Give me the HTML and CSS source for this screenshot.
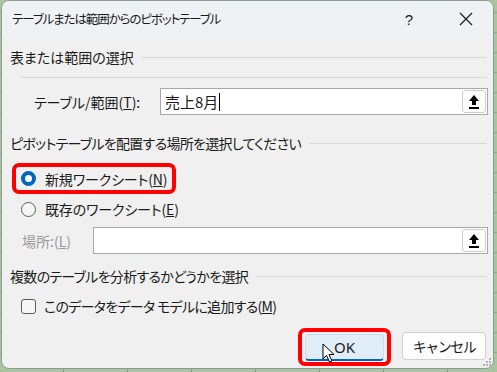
FILE: index.html
```html
<!DOCTYPE html>
<html lang="ja">
<head>
<meta charset="utf-8">
<title>ピボットテーブル</title>
<link rel="stylesheet" href="styles.css">
</head>
<body>
<div class="dialog">
  <div class="titlebar">
    <span class="title">テーブルまたは範囲からのピボットテーブル</span>
    <span class="help">?</span>
    <span class="close">
      <svg width="14" height="14" viewBox="0 0 14 14"><path d="M1 1L13 13M13 1L1 13" stroke="#1a1a1a" stroke-width="1.2" fill="none"/></svg>
    </span>
  </div>
  <div class="content">
    <div class="section-head"><span>表または範囲の選択</span><span class="rule"></span></div>
    <div class="sep"></div>
    <div class="field-row">
      <span class="label label-range">テーブル/範囲(<u>T</u>):</span>
      <div class="input input-range">
        <span class="value">売上8月<span class="caret"></span></span>
        <span class="pick">
          <svg width="12" height="16" viewBox="0 0 12 16"><path d="M6 1L11 7H8V11H4V7H1Z" fill="#000"/><rect x="1" y="13" width="10" height="2" fill="#000"/></svg>
        </span>
      </div>
    </div>

    <div class="section-head head2"><span class="tight">ピボットテーブルを配置する場所を選択してください</span><span class="rule"></span></div>
    <div class="highlight radio-hl">
      <span class="radio on"></span><span class="opt">新規ワークシート(<u>N</u>)</span>
    </div>
    <div class="radio-row">
      <span class="radio"></span><span class="opt">既存のワークシート(<u>E</u>)</span>
    </div>
    <div class="field-row loc-row">
      <span class="label label-loc disabled">場所:(<u>L</u>)</span>
      <div class="input input-loc">
        <span class="value"></span>
        <span class="pick">
          <svg width="12" height="16" viewBox="0 0 12 16"><path d="M6 1L11 7H8V11H4V7H1Z" fill="#000"/><rect x="1" y="13" width="10" height="2" fill="#000"/></svg>
        </span>
      </div>
    </div>

    <div class="section-head head3"><span class="tight">複数のテーブルを分析するかどうかを選択</span><span class="rule"></span></div>
    <div class="check-row">
      <span class="checkbox"></span><span class="opt tight">このデータをデータ モデルに追加する(<u>M</u>)</span>
    </div>

    <div class="buttons">
      <div class="highlight ok-hl">
        <button class="btn ok">OK
          <svg class="cursor" width="14" height="20" viewBox="0 0 14 20"><path d="M1 1V16L4.5 12.5L7.5 19L10 18L7 11.5H12Z" fill="#fff" stroke="#000" stroke-width="1" stroke-linejoin="round"/></svg>
        </button>
      </div>
      <button class="btn cancel">キャンセル</button>
    </div>
  </div>
  <div class="grip">
    <svg width="10" height="10" viewBox="0 0 10 10"><g fill="#b4b4b4"><rect x="7" y="1" width="2" height="2"/><rect x="4" y="4" width="2" height="2"/><rect x="7" y="4" width="2" height="2"/><rect x="1" y="7" width="2" height="2"/><rect x="4" y="7" width="2" height="2"/><rect x="7" y="7" width="2" height="2"/></g></svg>
  </div>
</div>
</body>
</html>
```

FILE: styles.css
```css
html, body {
  margin: 0;
  padding: 0;
}
body {
  width: 497px;
  height: 372px;
  overflow: hidden;
  background-color: #a9c49f;
  background-image:
    repeating-linear-gradient(90deg, transparent 0 63px, #7f9f77 63px 64px),
    repeating-linear-gradient(0deg, transparent 0 19px, #8fae86 19px 20px);
  font-family: "Noto Sans CJK JP", "Noto Sans", sans-serif;
  font-feature-settings: "palt";
  font-size: 14px;
  color: #1a1a1a;
}
.dialog {
  position: relative;
  margin-left: 1px;
  width: 493px;
  height: 369px;
  box-sizing: border-box;
  border: 1px solid #8e9a94;
  border-radius: 8px;
  background: #f0f0f0;
  overflow: hidden;
}
.titlebar {
  height: 36px;
  background: #eef2f5;
  display: flex;
  align-items: center;
  padding-left: 10px;
}
.title {
  flex: 1;
  font-size: 12.5px;
  letter-spacing: -1.1px;
  line-height: 20px;
}
.help {
  width: 20px;
  text-align: center;
  font-family: "Liberation Sans", sans-serif;
  font-size: 15px;
  margin-right: 40px;
}
.close {
  display: flex;
  margin-right: 20px;
}
.content {
  padding: 0 6px 0 8px;
}
.section-head {
  display: flex;
  align-items: center;
  height: 20px;
  margin-top: 10px;
  line-height: 20px;
  white-space: nowrap;
}
.tight {
  letter-spacing: -0.7px;
}
.rule {
  flex: 1;
  height: 1px;
  background: #dadada;
  margin-left: 8px;
}
.sep {
  height: 1px;
  background: #dadada;
  margin: 10px 0 0 11px;
}
.field-row {
  display: flex;
  align-items: center;
  margin-top: 10px;
}
.label {
  box-sizing: border-box;
  white-space: nowrap;
}
.label-range {
  width: 150px;
  padding-left: 24px;
}
.label-loc {
  width: 83px;
  padding-left: 12px;
}
.disabled {
  color: #9a9a9a;
}
.input {
  box-sizing: border-box;
  height: 27px;
  border: 1px solid #a8a8a8;
  background: #fff;
  display: flex;
  align-items: center;
  margin-right: -1px;
  flex: 1;
}
.value {
  flex: 1;
  padding-left: 4px;
  font-size: 15px;
  line-height: 20px;
  display: flex;
  align-items: center;
}
.caret {
  display: inline-block;
  width: 1px;
  height: 18px;
  background: #000;
  margin-left: 1px;
}
.pick {
  box-sizing: border-box;
  width: 24px;
  height: 23px;
  margin-right: 1px;
  border: 1px solid #cfcfcf;
  border-radius: 3px;
  background: #fdfdfd;
  display: flex;
  align-items: center;
  justify-content: center;
}
.head2 {
  margin-top: 18px;
}
.highlight {
  border: 4px solid #ff0000;
  border-radius: 7px;
}
.radio-hl {
  display: inline-flex;
  align-items: center;
  height: 23px;
  margin: 10px 0 0 2px;
  padding: 0 5px 0 5px;
  letter-spacing: -0.15px;
}
.radio {
  box-sizing: border-box;
  width: 15px;
  height: 15px;
  border-radius: 50%;
  border: 1px solid #5d5d5d;
  background: #f6f6f6;
  margin-right: 9px;
  flex: none;
}
.radio.on {
  border: 4.5px solid #0067c0;
  background: #fff;
}
.opt {
  white-space: pre;
  line-height: 20px;
}
.radio-row {
  display: flex;
  align-items: center;
  height: 30px;
  padding-left: 11px;
  letter-spacing: -0.15px;
}
.loc-row {
  margin-top: 3px;
}
.head3 {
  margin-top: 12px;
}
.check-row {
  display: flex;
  align-items: center;
  height: 20px;
  margin-top: 10px;
  padding-left: 11px;
}
.checkbox {
  box-sizing: border-box;
  width: 15px;
  height: 15px;
  border: 1px solid #5d5d5d;
  border-radius: 3px;
  background: #f6f6f6;
  margin-right: 8px;
}
.buttons {
  display: flex;
  justify-content: flex-end;
  align-items: flex-start;
  margin-top: 12px;
  padding-right: 1px;
}
.ok-hl {
  padding: 2px 3px 1px;
  margin-right: 11px;
}
.btn {
  box-sizing: border-box;
  font-family: inherit;
  font-size: 14px;
  color: #1a1a1a;
  border-radius: 4px;
  padding: 0;
  line-height: 20px;
}
.ok {
  position: relative;
  width: 79px;
  height: 27px;
  background: #e0edf8;
  border: 1px solid #c9dced;
  border-bottom: 2px solid #0067c0;
  font-family: "Noto Sans", sans-serif;
  font-size: 15px;
}
.cursor {
  position: absolute;
  left: 16px;
  top: 8px;
}
.cancel {
  width: 84px;
  height: 28px;
  margin-top: 4px;
  background: #fdfdfd;
  border: 1px solid #d0d0d0;
  letter-spacing: -1.5px;
}
.grip {
  position: absolute;
  right: 1px;
  bottom: 1px;
  display: flex;
}
```
